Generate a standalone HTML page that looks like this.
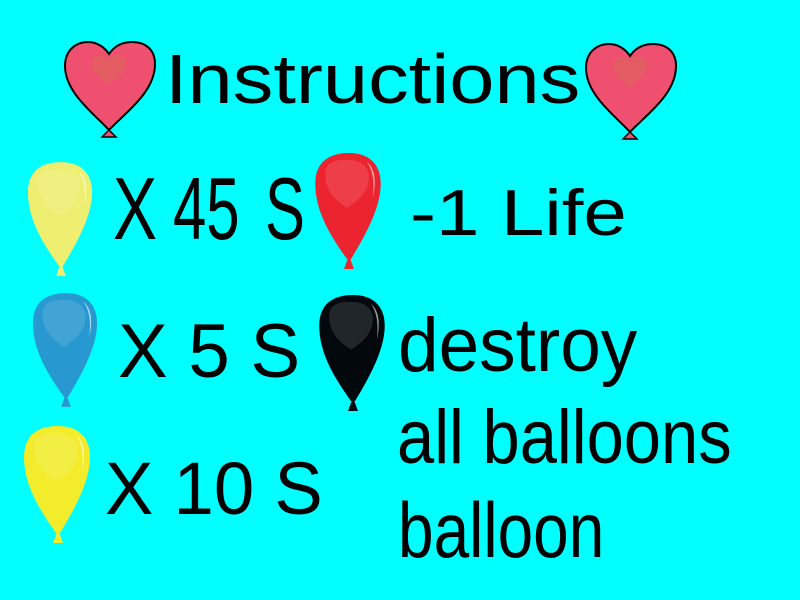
<!DOCTYPE html>
<html><head><meta charset="utf-8"><style>
html,body{margin:0;padding:0}
body{width:800px;height:600px;background:#00ffff;position:relative;overflow:hidden;font-family:"Liberation Sans",sans-serif;color:#000}
.t{position:absolute;line-height:1;white-space:pre;transform-origin:0 0}
svg{position:absolute}
</style></head><body>
<svg width="0" height="0" style="position:absolute">
<defs>
<g id="bal">
<path d="M34 108 C20 88 2 62 2 32 C2 10 16 1 36 1 C56 1 68 12 68 32 C68 58 50 88 38 108 Z" fill="currentColor"/>
<path d="M12 22 C12 10 22 8 34 8 C48 8 56 14 56 26 C56 40 44 50 34 56 C24 50 12 40 12 22 Z" fill="#fff" opacity="0.12"/>
<path d="M54 10 C62 16 64 30 60 46 C62 30 60 18 54 10 Z" fill="#fff" opacity="0.6"/>
<path d="M31 118 L35 107 L37 107 L41 118 Z" fill="currentColor"/>
</g>
<g id="heart">
<path d="M47 90 C30 72 3 52 3 26 C3 10 14 2 26 2 C36 2 43 8 47 14 C51 8 58 2 70 2 C84 2 93 10 93 24 C93 52 64 72 47 90 Z" fill="#f05070" stroke="#000" stroke-width="2"/>
<path d="M47 44 C38 38 30 32 30 24 C30 18 35 15 40 15 C43 15 46 17 47 20 C48 17 51 15 55 15 C60 15 64 18 64 24 C64 32 56 38 47 44 Z" fill="#e06060" opacity="0.8"/>
<path d="M47 90 L40 97 L54 97 Z" fill="#f05070" stroke="#000" stroke-width="1.5"/>
</g>
</defs>
</svg>

<svg style="left:62px;top:40px" width="96" height="100" viewBox="0 0 96 100"><use href="#heart"/></svg>
<svg style="left:583px;top:42px" width="96" height="100" viewBox="0 0 96 100"><use href="#heart"/></svg>

<svg style="left:26px;top:160px;color:#eeee70" width="68" height="119" viewBox="0 0 70 120"><use href="#bal"/></svg>
<svg style="left:312px;top:152px;color:#ec2430" width="72" height="119" viewBox="0 0 70 120"><use href="#bal"/></svg>
<svg style="left:31px;top:291px;color:#2898d0" width="68" height="119" viewBox="0 0 70 120"><use href="#bal"/></svg>
<svg style="left:317px;top:294px;color:#02080c" width="70" height="119" viewBox="0 0 70 120"><use href="#bal"/></svg>
<svg style="left:22px;top:425px;color:#f2ec2a" width="70" height="120" viewBox="0 0 70 120"><use href="#bal"/></svg>

<div class="t" style="left:165px;top:44px;font-size:70px;transform:scaleX(1.16)">Instructions</div>
<div class="t" style="left:113px;top:165px;font-size:88px;transform:scaleX(0.75)">X</div>
<div class="t" style="left:173px;top:165px;font-size:88px;transform:scaleX(0.68)">45</div>
<div class="t" style="left:265px;top:165px;font-size:88px;transform:scaleX(0.68)">S</div>
<div class="t" style="left:410px;top:180px;font-size:65px;transform:scaleX(1.2)">-1 Life</div>
<div class="t" style="left:118px;top:314px;font-size:76px;transform:scaleX(0.98)">X 5 S</div>
<div class="t" style="left:105px;top:452px;font-size:74px;transform:scaleX(0.98)">X 10 S</div>
<div class="t" style="left:398px;top:308px;font-size:76px;transform:scaleX(0.96)">destroy</div>
<div class="t" style="left:397px;top:400px;font-size:76px;transform:scaleX(0.88)">all balloons</div>
<div class="t" style="left:398px;top:491px;font-size:78px;transform:scaleX(0.82)">balloon</div>
</body></html>
